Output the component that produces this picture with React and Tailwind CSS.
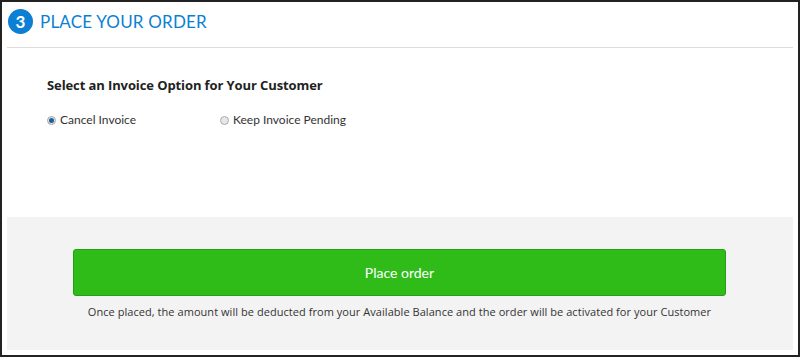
export default function App() {
  return (
    <div className="w-[800px] h-[357px] box-border border-2 border-[#222] bg-white p-[5px] flex flex-col font-['Lato',sans-serif]">
      <div className="h-[41px] border-b border-[#ddd] flex items-start pt-[2px] pl-[1px]">
        <div className="w-[25px] h-[25px] rounded-full bg-[#0b7fd3] text-white flex items-center justify-center text-[17px] font-bold leading-none">3</div>
        <div className="ml-[7px] h-[25px] flex items-center text-[17px] text-[#0b7fd3] tracking-[0.2px] leading-none">PLACE YOUR ORDER</div>
      </div>
      <div className="pl-[40px] pt-[29px]">
        <div className="text-[13px] font-bold text-[#222] leading-[16px] font-['Open_Sans',sans-serif] tracking-[-0.1px]">Select an Invoice Option for Your Customer</div>
        <div className="flex items-center mt-[20px] text-[12px] text-[#333] leading-[14px]">
          <div className="flex items-center w-[173px]">
            <span className="w-[9px] h-[9px] rounded-full border border-[#aaa] bg-[#e4e4e4] flex items-center justify-center">
              <span className="w-[5px] h-[5px] rounded-full bg-[#1f5f9a]"></span>
            </span>
            <span className="ml-[4px]">Cancel Invoice</span>
          </div>
          <div className="flex items-center">
            <span className="w-[9px] h-[9px] rounded-full border border-[#aaa] bg-[#e6e6e6]"></span>
            <span className="ml-[4px]">Keep Invoice Pending</span>
          </div>
        </div>
      </div>
      <div className="mt-auto h-[133px] bg-[#f3f3f3] pt-[32px] pl-[66px]">
        <button className="w-[653px] h-[47px] rounded-[3px] bg-[#2fbc19] border border-[#24a013] text-white text-[14px]">Place order</button>
        <div className="w-[653px] text-center text-[11px] text-[#333] mt-[8px] tracking-[0.05px] font-['Open_Sans',sans-serif]">Once placed, the amount will be deducted from your Available Balance and the order will be activated for your Customer</div>
      </div>
    </div>
  );
}
